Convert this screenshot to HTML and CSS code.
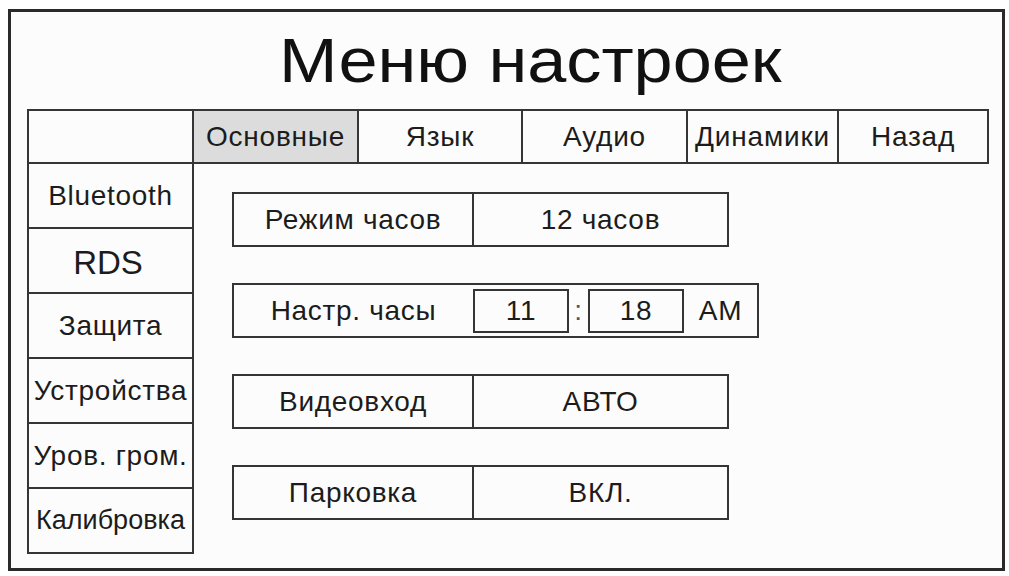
FILE: index.html
```html
<!DOCTYPE html>
<html lang="ru">
<head>
<meta charset="utf-8">
<title>Меню настроек</title>
<link rel="stylesheet" href="styles.css">
</head>
<body>
<div class="frame">
  <h1 class="title"><span class="title-text">Меню настроек</span></h1>
  <div class="tabs">
    <div class="tab tab-corner"></div>
    <div class="tab tab-w165 tab-active">Основные</div>
    <div class="tab tab-w164">Язык</div>
    <div class="tab tab-w165">Аудио</div>
    <div class="tab tab-w151">Динамики</div>
    <div class="tab tab-w150">Назад</div>
  </div>
  <div class="main">
    <div class="sidebar">
      <div class="side-item">Bluetooth</div>
      <div class="side-item side-big">RDS</div>
      <div class="side-item">Защита</div>
      <div class="side-item">Устройства</div>
      <div class="side-item">Уров. гром.</div>
      <div class="side-item side-small">Калибровка</div>
    </div>
    <div class="content">
      <div class="row">
        <div class="cell cell-label">Режим часов</div>
        <div class="cell cell-value">12 часов</div>
      </div>
      <div class="row row-time">
        <div class="cell cell-label-plain">Настр. часы</div>
        <div class="time-box">11</div>
        <div class="colon">:</div>
        <div class="time-box">18</div>
        <div class="cell ampm">AM</div>
      </div>
      <div class="row">
        <div class="cell cell-label">Видеовход</div>
        <div class="cell cell-value">АВТО</div>
      </div>
      <div class="row">
        <div class="cell cell-label">Парковка</div>
        <div class="cell cell-value">ВКЛ.</div>
      </div>
    </div>
  </div>
</div>
</body>
</html>
```

FILE: styles.css
```css
html, body {
  margin: 0;
  padding: 0;
  background: #ffffff;
}

body {
  font-family: "Liberation Sans", Arial, sans-serif;
  color: #1c1c1c;
}

.frame {
  margin: 9px 0 0 8px;
  width: 997px;
  height: 562px;
  box-sizing: border-box;
  border: 3px solid #2a2a2a;
  background: #fcfcfc;
  padding-left: 16px;
  display: flex;
  flex-direction: column;
}

.title {
  margin: 0;
  height: 97px;
  padding-left: 31px;
  display: flex;
  align-items: center;
  justify-content: center;
  font-size: 63px;
  font-weight: normal;
  line-height: 1;
  color: #111;
  width: 976px;
  box-sizing: border-box;
}

.title-text {
  display: inline-block;
  transform: scaleX(1.115);
}

.tabs {
  display: flex;
  height: 55px;
  box-sizing: border-box;
  border-top: 2px solid #353535;
  border-left: 2px solid #353535;
  align-self: flex-start;
}

.tab {
  box-sizing: border-box;
  border-right: 2px solid #353535;
  border-bottom: 2px solid #353535;
  display: flex;
  align-items: center;
  justify-content: center;
  font-size: 28px;
  letter-spacing: 0.8px;
}

.tab-corner { width: 165px; }
.tab-w165 { width: 165px; }
.tab-w164 { width: 164px; }
.tab-w151 { width: 151px; }
.tab-w150 { width: 150px; }

.tab-active {
  background: #dcdcdc;
}

.main {
  display: flex;
  flex: 1;
}

.sidebar {
  width: 167px;
  box-sizing: border-box;
  border-left: 2px solid #353535;
  display: flex;
  flex-direction: column;
  align-self: flex-start;
}

.side-item {
  height: 65px;
  box-sizing: border-box;
  border-right: 2px solid #353535;
  border-bottom: 2px solid #353535;
  display: flex;
  align-items: center;
  justify-content: center;
  font-size: 28px;
  letter-spacing: 0.7px;
  white-space: nowrap;
}

.side-big {
  font-size: 33px;
  letter-spacing: 0;
  padding-right: 5px;
  padding-top: 4px;
}

.side-small {
  font-size: 27px;
  letter-spacing: 0;
}

.content {
  padding: 28px 0 0 38px;
  display: flex;
  flex-direction: column;
  align-items: flex-start;
  gap: 36px;
}

.row {
  display: flex;
  width: 497px;
  height: 55px;
  box-sizing: border-box;
  border: 2px solid #353535;
  font-size: 28px;
  letter-spacing: 0.7px;
}

.row-time {
  width: 527px;
}

.cell {
  display: flex;
  align-items: center;
  justify-content: center;
}

.cell-label {
  width: 240px;
  box-sizing: border-box;
  border-right: 2px solid #353535;
}

.cell-label-plain {
  width: 239px;
}

.cell-value {
  flex: 1;
}

.time-box {
  width: 96px;
  height: 44px;
  margin-top: 4px;
  box-sizing: border-box;
  border: 2px solid #353535;
  display: flex;
  align-items: center;
  justify-content: center;
}

.colon {
  width: 19px;
  display: flex;
  align-items: center;
  justify-content: center;
  color: #555;
}

.ampm {
  flex: 1;
}
```
